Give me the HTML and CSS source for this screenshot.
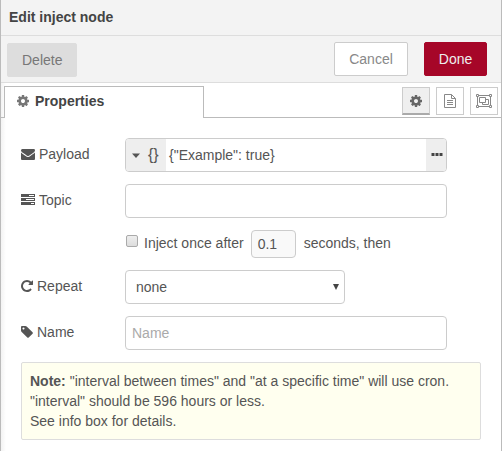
FILE: index.html
```html
<!DOCTYPE html>
<html lang="en">
<head>
<meta charset="utf-8">
<title>Edit inject node</title>
<link rel="stylesheet" href="styles.css">
</head>
<body>
<svg class="defs" width="0" height="0">
  <symbol id="cog" viewBox="0 0 1792 1792"><path d="M1152 896q0-106-75-181t-181-75-181 75-75 181 75 181 181 75 181-75 75-181zm512-109v222q0 12-8 23t-20 13l-185 28q-19 54-39 91 35 50 107 138 10 12 10 25t-9 23q-27 37-99 108t-94 71q-12 0-26-9l-138-108q-44 23-91 38-16 136-29 186-7 28-36 28h-222q-14 0-24.5-8.5t-11.5-21.5l-28-184q-49-16-90-37l-141 107q-10 9-25 9-14 0-25-11-126-114-165-168-7-10-7-23 0-12 8-23 15-21 51-66.500t54-70.500q-27-50-41-99l-183-27q-13-2-21-12.500t-8-23.500v-222q0-12 8-23t19-13l186-28q14-46 39-92-40-57-107-138-10-12-10-24 0-10 9-23 26-36 98.500-107.500t94.500-71.500q13 0 26 10l138 107q44-23 91-38 16-136 29-186 7-28 36-28h222q14 0 24.500 8.500t11.500 21.500l28 184q49 16 90 37l142-107q9-9 24-9 13 0 25 10 129 119 165 170 7 8 7 22 0 12-8 23-15 21-51 66.500t-54 70.500q26 50 41 98l183 28q13 2 21 12.500t8 23.500z"/></symbol>
</svg>
<main class="tray">
  <header class="title">Edit inject node</header>
  <div class="toolbar">
    <button class="btn delete">Delete</button>
    <button class="btn cancel">Cancel</button>
    <button class="btn done">Done</button>
  </div>
  <nav class="tabs">
    <div class="tab"><svg class="icon"><use href="#cog"/></svg><span>Properties</span></div>
    <div class="tab-buttons">
      <button class="square active"><svg class="icon"><use href="#cog"/></svg></button>
      <button class="square"><svg class="icon" viewBox="0 0 14 14"><g fill="none" stroke="currentColor"><path d="M1.500.5h7l4 4v9h-11z"/><path d="M8.500.5v4h4M4 6.500h6M4 8.500h6M4 10.500h6"/></g></svg></button>
      <button class="square"><svg class="icon group" viewBox="0 0 16 14"><g fill="none" stroke="currentColor"><path d="M3 1.500h10M3 12.500h10M1.500 3v8M14.500 3v8"/><path d="M.5.5h2v2h-2zM13.500.5h2v2h-2zM.5 11.500h2v2h-2zM13.500 11.500h2v2h-2z"/><path d="M3.500 3.500h6v5h-6zM9.500 5.500h3v5h-6v-2"/></g></svg></button>
    </div>
  </nav>
  <form class="form">
    <div class="row">
      <label class="label"><svg class="icon" viewBox="0 0 1792 1792"><path d="M1792 710v794q0 66-47 113t-113 47h-1472q-66 0-113-47t-47-113v-794q44 49 101 87 362 246 497 345 57 42 92.500 65.500t94.500 48 110 24.500h2q51 0 110-24.500t94.500-48 92.500-65.500q170-123 498-345 57-39 100-87zm0-294q0 79-49 151t-122 123q-376 261-468 325-10 7-42.500 30.500t-54 38-52 32.500-57.500 27-50 9h-2q-23 0-50-9t-57.500-27-52-32.500-54-38-42.500-30.500q-91-64-262-182.500t-205-142.500q-62-42-117-115.500t-55-136.500q0-78 41.500-130t118.500-52h1472q65 0 112.500 47t47.500 113z"/></svg><span>Payload</span></label>
      <div class="field typed">
        <span class="type"><svg class="caret" viewBox="0 0 8 5"><path d="M0 .5h8L4 5z"/></svg><span class="braces">{}</span></span>
        <span class="value">{"Example": true}</span>
        <span class="more"><svg class="dots" viewBox="0 0 12 3"><path d="M.5 0h3v3h-3zM4.500 0h3v3h-3zM8.500 0h3v3h-3z"/></svg></span>
      </div>
    </div>
    <div class="row">
      <label class="label"><svg class="icon" viewBox="0 0 14 14"><path fill-rule="evenodd" d="M0 1h14v3H0zM8 2v1h5V2zM0 5h14v3H0zM5 6v1h8V6zM0 9h14v3H0zM10 10v1h3v-1z"/></svg><span>Topic</span></label>
      <div class="field"></div>
    </div>
    <div class="row once">
      <span class="check"></span><span>Inject once after</span>
      <span class="delay">0.1</span><span>seconds, then</span>
    </div>
    <div class="row">
      <label class="label narrow"><svg class="icon" viewBox="128 0 1536 1792"><path d="M1664 256v448q0 26-19 45t-45 19h-448q-42 0-59-40-17-39 14-69l138-138q-148-137-349-137-104 0-198.500 40.500t-163.500 109.500-109.500 163.500-40.500 198.500 40.500 198.500 109.500 163.500 163.500 109.500 198.500 40.500q119 0 225-52t179-147q7-10 23-12 15 0 25 9l137 138q9 8 9.500 20.500t-7.500 22.500q-109 132-264 204.500t-327 72.500q-156 0-298-61t-245-164-164-245-61-298 61-298 164-245 245-164 298-61q147 0 284.500 55.500t244.500 156.500l130-129q29-31 70-14 39 17 39 59z"/></svg><span>Repeat</span></label>
      <div class="field select"><span>none</span><svg class="arrow" viewBox="0 0 6 6"><path d="M0 0h6L3 6z"/></svg></div>
    </div>
    <div class="row">
      <label class="label narrow"><svg class="icon" viewBox="128 0 1536 1792"><path d="M576 448q0-53-37.500-90.500t-90.500-37.500-90.500 37.500-37.500 90.500 37.500 90.500 90.500 37.500 90.500-37.500 37.500-90.500zm1067 576q0 53-37 90l-491 492q-39 37-91 37-53 0-90-37l-715-716q-38-37-64.500-101t-26.500-117v-416q0-52 38-90t90-38h416q53 0 117 26.500t102 64.500l715 714q37 39 37 91z"/></svg><span>Name</span></label>
      <div class="field placeholder">Name</div>
    </div>
    <div class="note"><b>Note:</b> "interval between times" and "at a specific time" will use cron.<br>"interval" should be 596 hours or less.<br>See info box for details.</div>
  </form>
</main>
</body>
</html>
```
FILE: styles.css
```css
* { box-sizing: border-box; }
body {
  margin: 0;
  font: 14px/20px "Liberation Sans", Arial, sans-serif;
  color: #555;
  background: #fff;
}
.defs { display: none; }
.tray {
  height: 451px;
  overflow: hidden;
  border-left: 1px solid #bbb;
  border-right: 1px solid #bbb;
  background: linear-gradient(to right, #f3f3f3, #fff 5px);
}
.icon { width: 14px; height: 14px; fill: currentColor; flex: none; display: block; }
.title {
  height: 36px;
  padding: 7px 8px;
  font-weight: bold;
  color: #444;
  background: #f3f3f3;
  border-bottom: 1px solid #ddd;
}
.toolbar {
  display: flex;
  height: 47px;
  padding: 6px 14px 0 6px;
  background: #f3f3f3;
  border-bottom: 1px solid #ddd;
}
.btn {
  height: 34px;
  padding: 0 14px;
  font: inherit;
  border: 1px solid #ccc;
  border-radius: 2px;
  background: #fff;
  color: #888;
}
.delete { width: 70px; margin: 1px auto 0 0; background: #ddd; border-color: #ddd; color: #777; }
.cancel { width: 74px; margin-right: 16px; }
.done { width: 63px; padding: 0; background: #a60628; border-color: #a60628; color: #eee; }
.tabs {
  display: flex;
  justify-content: space-between;
  height: 35px;
  padding: 3px 3px 0;
  background: linear-gradient(#bbb, #bbb) bottom / 100% 1px no-repeat;
}
.tab {
  display: flex;
  gap: 4px;
  width: 200px;
  height: 32px;
  padding: 4px 0 0 11px;
  background: #fff;
  border: 1px solid #bbb;
  border-bottom: 0;
  font-weight: bold;
  color: #444;
}
.tab .icon { margin-top: 3px; color: #777; }
.tab span { margin-left: 1px; }
.tab-buttons { display: flex; gap: 6px; padding-top: 1px; }
.square {
  display: flex;
  align-items: center;
  justify-content: center;
  width: 28px;
  height: 28px;
  padding: 0;
  border: 1px solid #ccc;
  background: #fff;
  color: #888;
}
.square .group { width: 16px; }
.active { background: #efefef; border-bottom: 2px solid #aaa; color: #666; }
.form { padding: 20px 20px 0; }
.row { display: flex; margin-bottom: 12px; }
.label { display: flex; gap: 4px; width: 104px; padding-top: 6px; }
.label .icon { margin-top: 3px; }
.narrow .icon { width: 12px; }
.field {
  width: 322px;
  height: 34px;
  padding: 6px;
  border: 1px solid #ccc;
  border-radius: 4px;
  background: #fff;
}
.typed { display: flex; padding: 0; overflow: hidden; line-height: 33px; }
.type { display: flex; width: 40px; background: #eee; }
.caret { width: 8px; height: 5px; margin: 14px 8px 0 6px; fill: #555; }
.braces { font-size: 16px; line-height: 32px; }
.value { flex: 1; padding-left: 3px; }
.more { width: 20px; padding: 14px 0 0 5px; background: #eee; }
.dots { display: block; width: 12px; height: 3px; fill: #444; }
.once { height: 28px; padding: 0 0 0 105px; line-height: 27px; }
.check {
  width: 12px;
  height: 12px;
  margin: 5px 6px 0 0;
  border: 1px solid #aaa;
  border-radius: 2px;
  background: linear-gradient(#eee, #ddd);
}
.delay {
  width: 45px;
  height: 28px;
  margin: 0 8px 0 7px;
  padding-left: 6px;
  border: 1px solid #ccc;
  border-radius: 4px;
  background: #f9f9f9;
}
.select { display: flex; justify-content: space-between; width: 220px; padding: 6px 5px 0 10px; }
.arrow { width: 6px; height: 6px; margin-top: 7px; fill: #444; }
.placeholder { color: #aaa; }
.note {
  width: 460px;
  height: 78px;
  padding: 8px;
  border: 1px solid #ddd;
  border-radius: 2px;
  background: #ffffef;
}
```
